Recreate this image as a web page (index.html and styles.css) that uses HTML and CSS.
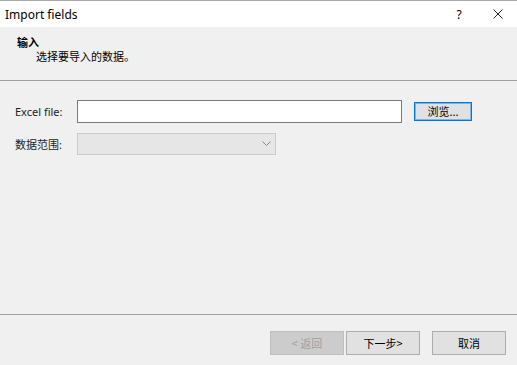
FILE: index.html
```html
<!DOCTYPE html>
<html lang="zh">
<head>
  <meta charset="UTF-8">
  <title>Import fields</title>
  <link rel="stylesheet" href="styles.css">
</head>
<body>
  <div class="dialog">
    <div class="titlebar">
      <span class="title">Import fields</span>
      <span class="title-btn help">?</span>
      <span class="title-btn close">
        <svg width="10" height="10" viewBox="0 0 10 10"><path d="M0.5 0.5 L9.5 9.5 M9.5 0.5 L0.5 9.5" stroke="#222" stroke-width="1" fill="none"/></svg>
      </span>
    </div>

    <div class="page-head">
      <div class="head-title">输入</div>
      <div class="head-sub">选择要导入的数据。</div>
    </div>

    <div class="content">
      <div class="row">
        <label class="label" for="file">Excel file:</label>
        <input class="file-input" id="file" type="text">
        <button class="btn browse" type="button">浏览...</button>
      </div>
      <div class="row">
        <span class="label">数据范围:</span>
        <div class="combo">
          <svg width="9" height="6" viewBox="0 0 9 6"><path d="M0.5 0.5 L4.5 4.5 L8.5 0.5" stroke="#888" stroke-width="1" fill="none"/></svg>
        </div>
      </div>
    </div>

    <div class="footer">
      <button class="btn wizard" type="button" disabled>&lt; 返回</button>
      <button class="btn wizard" type="button">下一步&gt;</button>
      <button class="btn wizard cancel" type="button">取消</button>
    </div>
  </div>
</body>
</html>
```

FILE: styles.css
```css
body {
  margin: 0;
  padding: 0;
  background-color: #f0f0f0;
  font-family: "Noto Sans", "Noto Sans CJK SC", sans-serif;
  font-size: 12px;
  color: #000;
}

.dialog {
  width: 517px;
  height: 365px;
  display: flex;
  flex-direction: column;
  border-top: 1px solid #a8a8a8;
  box-sizing: border-box;
}

.titlebar {
  height: 26px;
  background: #fff;
  display: flex;
  align-items: center;
  padding-left: 5px;
}

.title {
  flex: 1;
  font-size: 12px;
}

.title-btn {
  width: 40px;
  text-align: center;
}

.help {
  font-size: 12px;
}

.close {
  display: flex;
  justify-content: center;
  width: 38px;
}

.page-head {
  height: 54px;
  border-bottom: 1px solid #a0a0a0;
  padding: 9px 0 0 17px;
  box-sizing: border-box;
}

.head-title {
  font-weight: bold;
  font-size: 11px;
  line-height: 14px;
}

.head-sub {
  padding-left: 19px;
  font-size: 11px;
  line-height: 14px;
}

.content {
  flex: 1;
  padding: 19px 0 0 15px;
  display: flex;
  flex-direction: column;
  gap: 10px;
  border-bottom: 1px solid #a0a0a0;
}

.row {
  display: flex;
  align-items: center;
}

.label {
  width: 62px;
  font-size: 11px;
  color: #222;
}

.file-input {
  width: 325px;
  height: 23px;
  box-sizing: border-box;
  border: 1px solid #7a7a7a;
  background: #fff;
  margin: 0;
  padding: 0 4px;
}

.btn {
  font-family: "Noto Sans CJK SC", "Noto Sans", sans-serif;
  font-size: 11px;
  background: #e1e1e1;
  border: 1px solid #adadad;
  color: #000;
  padding: 0;
  margin: 0;
  box-sizing: border-box;
}

.browse {
  width: 58px;
  height: 19px;
  margin-left: 12px;
  border: 1px solid #0078d7;
  box-shadow: inset 0 0 0 1px #7ab7e8;
  line-height: 15px;
}

.combo {
  width: 199px;
  height: 22px;
  box-sizing: border-box;
  border: 1px solid #cccccc;
  background: #e6e6e6;
  display: flex;
  justify-content: flex-end;
  align-items: center;
  padding-right: 4px;
}

.footer {
  height: 50px;
  display: flex;
  justify-content: flex-end;
  padding: 16px 11px 0 0;
  box-sizing: border-box;
  gap: 2px;
}

.wizard {
  width: 74px;
  height: 24px;
}

.wizard:disabled {
  background: #cccccc;
  border-color: #bfbfbf;
  color: #a0a0a0;
}

.cancel {
  margin-left: 10px;
}
```
